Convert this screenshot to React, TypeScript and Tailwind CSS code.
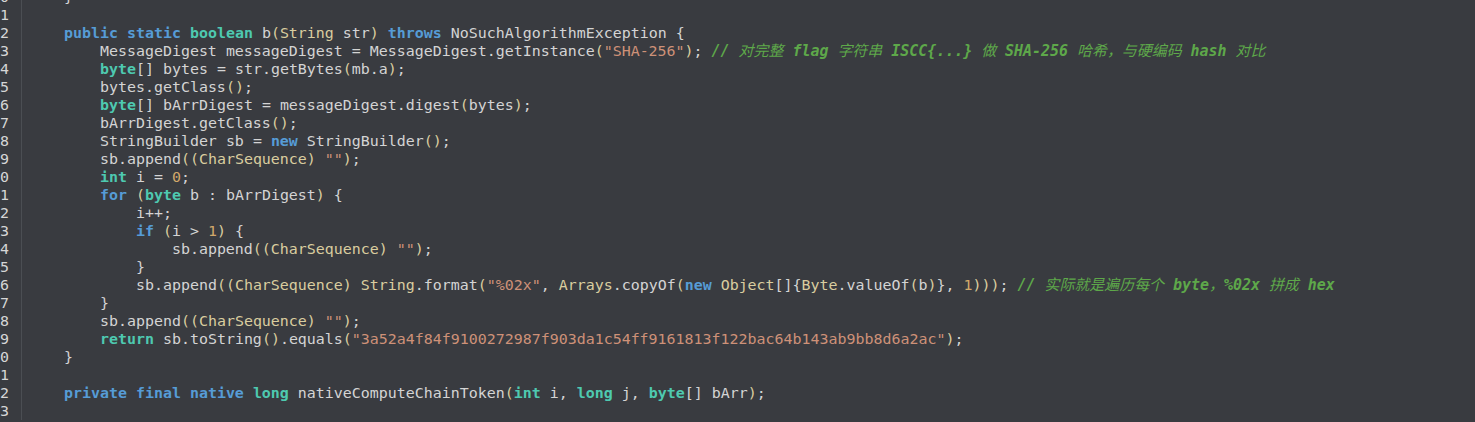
import React from 'react';

type Kind = 'plain' | 'kw' | 'type' | 'cls' | 'paren' | 'str' | 'num';

const BLUE = new Set(['public', 'static', 'throws', 'new', 'for', 'if', 'private', 'final', 'native']);
const TEAL = new Set(['boolean', 'byte', 'int', 'return', 'long']);
const CLASSES = new Set(['String', 'CharSequence', 'Arrays', 'Object', 'Byte']);

const kindClass: Record<Kind, string> = {
  plain: 'text-[#d4d4d4]',
  kw: 'font-bold text-[#569cd6]',
  type: 'font-bold text-[#4ec9b0]',
  cls: 'text-[#d9cd9f]',
  paren: 'text-[#d9cd9f]',
  str: 'text-[#ce9178]',
  num: 'text-[#d2a86a]',
};

// source shown in the editor, first row is partly above the window
const lines: string[] = [
  '    }',
  '',
  '    public static boolean b(String str) throws NoSuchAlgorithmException {',
  '        MessageDigest messageDigest = MessageDigest.getInstance("SHA-256"); // 对完整 flag 字符串 ISCC{...} 做 SHA-256 哈希，与硬编码 hash 对比',
  '        byte[] bytes = str.getBytes(mb.a);',
  '        bytes.getClass();',
  '        byte[] bArrDigest = messageDigest.digest(bytes);',
  '        bArrDigest.getClass();',
  '        StringBuilder sb = new StringBuilder();',
  '        sb.append((CharSequence) "");',
  '        int i = 0;',
  '        for (byte b : bArrDigest) {',
  '            i++;',
  '            if (i > 1) {',
  '                sb.append((CharSequence) "");',
  '            }',
  '            sb.append((CharSequence) String.format("%02x", Arrays.copyOf(new Object[]{Byte.valueOf(b)}, 1))); // 实际就是遍历每个 byte，%02x 拼成 hex',
  '        }',
  '        sb.append((CharSequence) "");',
  '        return sb.toString().equals("3a52a4f84f9100272987f903da1c54ff9161813f122bac64b143ab9bb8d6a2ac");',
  '    }',
  '',
  '    private final native long nativeComputeChainToken(int i, long j, byte[] bArr);',
  '',
];

function tokenize(code: string): { text: string; kind: Kind }[] {
  const out: { text: string; kind: Kind }[] = [];
  const re = /("[^"]*")|(\b\d+\b)|([A-Za-z_]\w*)|(\s+)|([()])|(.)/g;
  let m: RegExpExecArray | null;
  while ((m = re.exec(code))) {
    if (m[1]) out.push({ text: m[1], kind: 'str' });
    else if (m[2]) out.push({ text: m[2], kind: 'num' });
    else if (m[3]) {
      const w = m[3];
      out.push({ text: w, kind: BLUE.has(w) ? 'kw' : TEAL.has(w) ? 'type' : CLASSES.has(w) ? 'cls' : 'plain' });
    } else if (m[5]) out.push({ text: m[5], kind: 'paren' });
    else out.push({ text: m[0], kind: 'plain' });
  }
  return out;
}

// latin runs of a comment are heavier than the CJK ones
const Comment: React.FC<{ text: string }> = ({ text }) => {
  const parts = text.match(/[\u3000-\u9fff\uff00-\uffef]+|[^\u3000-\u9fff\uff00-\uffef]+/g) ?? [];
  return (
    <span className="italic text-[#5ea84a]">
      {parts.map((p, i) =>
        /^[\u3000-\u9fff\uff00-\uffef]/.test(p) ? (
          <span key={i}>{p}</span>
        ) : (
          <span key={i} className="font-bold">
            {p}
          </span>
        ),
      )}
    </span>
  );
};

const CodeLine: React.FC<{ src: string }> = ({ src }) => {
  const idx = src.indexOf(' // ');
  const code = idx >= 0 ? src.slice(0, idx + 1) : src;
  const comment = idx >= 0 ? src.slice(idx + 1) : '';
  return (
    <div className="h-[18px] whitespace-pre">
      {tokenize(code).map((t, i) => (
        <span key={i} className={kindClass[t.kind]}>
          {t.text}
        </span>
      ))}
      {comment && <Comment text={comment} />}
    </div>
  );
};

export default function App() {
  return (
    <div
      className="h-[422px] w-[1475px] overflow-hidden bg-[#393b40] text-[14.95px] leading-[18px]"
      style={{ fontFamily: '"DejaVu Sans Mono", "Noto Sans CJK SC", monospace' }}
    >
      <div className="-mt-[12px] flex">
        {/* gutter, only the last digit of each number is in view */}
        <div className="w-[22px] shrink-0 overflow-hidden border-r border-[#4b4e53]">
          <div className="ml-auto flex w-[60px] -translate-x-[51px] flex-col items-end text-[#d6d6d6]">
            {lines.map((_, i) => (
              <div key={i} className="h-[18px]">
                {110 + i}
              </div>
            ))}
          </div>
        </div>

        <div className="pl-[6px]">
          {lines.map((l, i) => (
            <CodeLine key={i} src={l} />
          ))}
        </div>
      </div>
    </div>
  );
}
